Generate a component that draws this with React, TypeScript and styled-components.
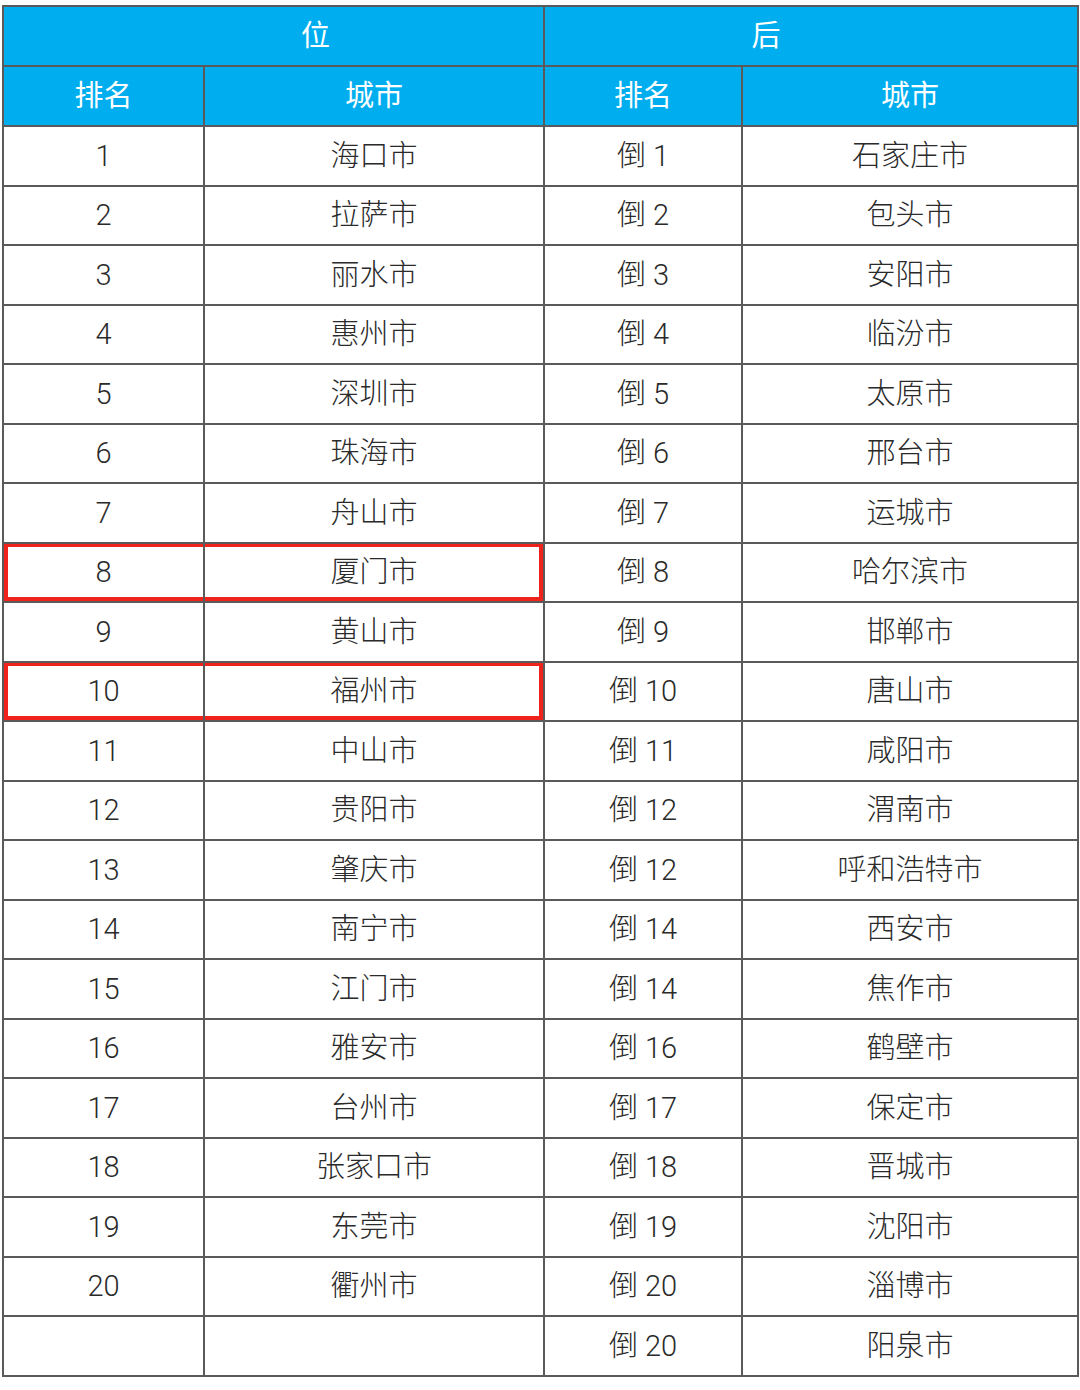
import styled, { createGlobalStyle, css } from "styled-components";

const GlobalStyle = createGlobalStyle`
  html, body {
    margin: 0;
    padding: 0;
    background: #ffffff;
  }
  body {
    font-family: Roboto, "Noto Sans CJK SC", sans-serif;
  }
`;

const HEAD_BLUE = "#00aeef";
const LINE = "#5a5a5a";
const MARK = "#f0231c";

type Row = { rank: string; city: string; backRank: string; backCity: string; marked?: boolean };

const rows: Row[] = [
  { rank: "1", city: "海口市", backRank: "倒 1", backCity: "石家庄市" },
  { rank: "2", city: "拉萨市", backRank: "倒 2", backCity: "包头市" },
  { rank: "3", city: "丽水市", backRank: "倒 3", backCity: "安阳市" },
  { rank: "4", city: "惠州市", backRank: "倒 4", backCity: "临汾市" },
  { rank: "5", city: "深圳市", backRank: "倒 5", backCity: "太原市" },
  { rank: "6", city: "珠海市", backRank: "倒 6", backCity: "邢台市" },
  { rank: "7", city: "舟山市", backRank: "倒 7", backCity: "运城市" },
  { rank: "8", city: "厦门市", backRank: "倒 8", backCity: "哈尔滨市", marked: true },
  { rank: "9", city: "黄山市", backRank: "倒 9", backCity: "邯郸市" },
  { rank: "10", city: "福州市", backRank: "倒 10", backCity: "唐山市", marked: true },
  { rank: "11", city: "中山市", backRank: "倒 11", backCity: "咸阳市" },
  { rank: "12", city: "贵阳市", backRank: "倒 12", backCity: "渭南市" },
  { rank: "13", city: "肇庆市", backRank: "倒 12", backCity: "呼和浩特市" },
  { rank: "14", city: "南宁市", backRank: "倒 14", backCity: "西安市" },
  { rank: "15", city: "江门市", backRank: "倒 14", backCity: "焦作市" },
  { rank: "16", city: "雅安市", backRank: "倒 16", backCity: "鹤壁市" },
  { rank: "17", city: "台州市", backRank: "倒 17", backCity: "保定市" },
  { rank: "18", city: "张家口市", backRank: "倒 18", backCity: "晋城市" },
  { rank: "19", city: "东莞市", backRank: "倒 19", backCity: "沈阳市" },
  { rank: "20", city: "衢州市", backRank: "倒 20", backCity: "淄博市" },
  { rank: "", city: "", backRank: "倒 20", backCity: "阳泉市" },
];

const Page = styled.div`
  padding: 5px 3px 0 2px;
`;

const Table = styled.table`
  width: 1075px;
  border-collapse: collapse;
  table-layout: fixed;
  border: 2px solid ${LINE};
`;

const GroupCell = styled.th<{ $shift: number }>`
  height: 58px;
  padding: 0;
  padding-left: ${(p) => (p.$shift > 0 ? p.$shift * 2 : 0)}px;
  padding-right: ${(p) => (p.$shift < 0 ? -p.$shift * 2 : 0)}px;
  background: ${HEAD_BLUE};
  color: #ffffff;
  font-size: 29px;
  font-weight: 400;
  line-height: 34px;
  text-align: center;
  vertical-align: middle;
  border: 2px solid ${LINE};
  border-top: none;
`;

const HeadCell = styled.th`
  height: 58px;
  padding: 0;
  background: ${HEAD_BLUE};
  color: #ffffff;
  font-size: 29px;
  font-weight: 400;
  line-height: 34px;
  text-align: center;
  vertical-align: middle;
  border: 2px solid ${LINE};
`;

const markLeft = css`
  box-shadow: inset 4px 0 0 ${MARK}, inset 0 3px 0 ${MARK}, inset 0 -4px 0 ${MARK};
`;

const markRight = css`
  box-shadow: inset -4px 0 0 ${MARK}, inset 0 3px 0 ${MARK}, inset 0 -4px 0 ${MARK};
`;

const Cell = styled.td<{ $mark?: "left" | "right" }>`
  height: 57.5px;
  padding: 0;
  color: #2a2a2a;
  font-size: 29px;
  font-weight: 300;
  line-height: 34px;
  text-align: center;
  vertical-align: middle;
  border: 2px solid ${LINE};
  ${(p) => (p.$mark === "left" ? markLeft : p.$mark === "right" ? markRight : "")}
`;

export default function App() {
  return (
    <Page>
      <GlobalStyle />
      <Table>
        <colgroup>
          <col style={{ width: 201 }} />
          <col style={{ width: 340 }} />
          <col style={{ width: 198 }} />
          <col style={{ width: 336 }} />
        </colgroup>
        <thead>
          <tr>
            <GroupCell colSpan={2} $shift={42}>位</GroupCell>
            <GroupCell colSpan={2} $shift={-45}>后</GroupCell>
          </tr>
          <tr>
            <HeadCell>排名</HeadCell>
            <HeadCell>城市</HeadCell>
            <HeadCell>排名</HeadCell>
            <HeadCell>城市</HeadCell>
          </tr>
        </thead>
        <tbody>
          {rows.map((r, i) => (
            <tr key={i}>
              <Cell $mark={r.marked ? "left" : undefined}>{r.rank}</Cell>
              <Cell $mark={r.marked ? "right" : undefined}>{r.city}</Cell>
              <Cell>{r.backRank}</Cell>
              <Cell>{r.backCity}</Cell>
            </tr>
          ))}
        </tbody>
      </Table>
    </Page>
  );
}
